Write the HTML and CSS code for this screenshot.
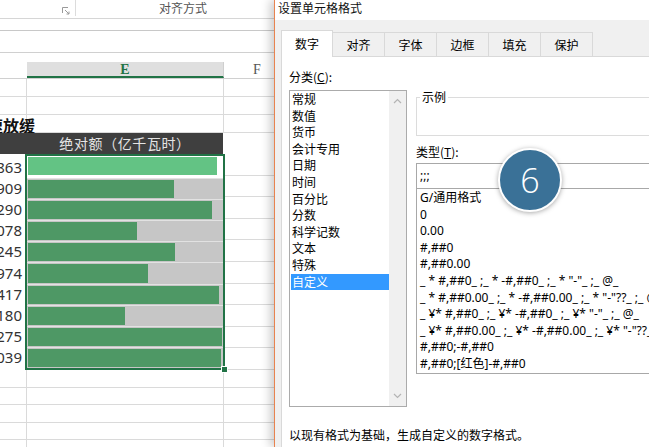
FILE: index.html
```html
<!DOCTYPE html>
<html lang="zh-CN">
<head>
<meta charset="utf-8">
<title>设置单元格格式</title>
<link rel="stylesheet" href="styles.css">
</head>
<body>
<div class="screen">
  <div class="sheet">
    <div class="ribbon">
      <div class="rb-left">
        <svg class="launcher" width="8" height="8" viewBox="0 0 8 8"><path d="M0.5 6V0.5H6" fill="none" stroke="#9a9a9a"/><path d="M3 3L7 7M7 4.5V7H4.5" fill="none" stroke="#9a9a9a"/></svg>
      </div>
      <div class="rb-group">对齐方式</div>
    </div>
    <div class="fbar"></div>
    <div class="fbar2"></div>
    <div class="spacer"></div>
    <div class="colhead">
      <div class="cd hd"></div>
      <div class="ce he">E</div>
      <div class="cf hf">F</div>
    </div>
    <div class="row r18"><div class="cd"></div><div class="ce"></div><div class="cf"></div></div>
    <div class="row r18"><div class="cd"></div><div class="ce"></div><div class="cf"></div></div>
    <div class="row r18"><div class="cd"><span class="sheet-title">速放缓</span></div><div class="ce"></div><div class="cf"></div></div>
    <div class="row dark"><div class="cd darkc"></div><div class="ce darkc">绝对额（亿千瓦时）</div><div class="cf"></div></div>
    <div class="data">
      <div class="nums">
        <div class="num"><span>5863</span></div>
        <div class="num"><span>4909</span></div>
        <div class="num"><span>5290</span></div>
        <div class="num"><span>3078</span></div>
        <div class="num"><span>4245</span></div>
        <div class="num"><span>3974</span></div>
        <div class="num"><span>5417</span></div>
        <div class="num"><span>2180</span></div>
        <div class="num"><span>5275</span></div>
        <div class="num"><span>5039</span></div>
      </div>
      <div class="sel">
        <div class="track first"><div class="bar" style="width:98.5%"></div></div>
        <div class="track"><div class="bar" style="width:75%"></div></div>
        <div class="track"><div class="bar" style="width:95%"></div></div>
        <div class="track"><div class="bar" style="width:56%"></div></div>
        <div class="track"><div class="bar" style="width:76%"></div></div>
        <div class="track"><div class="bar" style="width:62%"></div></div>
        <div class="track"><div class="bar" style="width:98.5%"></div></div>
        <div class="track"><div class="bar" style="width:50%"></div></div>
        <div class="track"><div class="bar" style="width:100%"></div></div>
        <div class="track"><div class="bar" style="width:99.5%"></div></div>
        <div class="handle"></div>
      </div>
      <div class="fcol">
        <div class="fcell"></div><div class="fcell"></div><div class="fcell"></div><div class="fcell"></div><div class="fcell"></div>
        <div class="fcell"></div><div class="fcell"></div><div class="fcell"></div><div class="fcell"></div><div class="fcell"></div>
      </div>
    </div>
    <div class="row r17"><div class="cd"></div><div class="ce"></div><div class="cf"></div></div>
    <div class="row r17"><div class="cd"></div><div class="ce"></div><div class="cf"></div></div>
    <div class="row r17"><div class="cd"></div><div class="ce"></div><div class="cf"></div></div>
    <div class="row r17"><div class="cd"></div><div class="ce"></div><div class="cf"></div></div>
    <div class="row r17"><div class="cd"></div><div class="ce"></div><div class="cf"></div></div>
  </div>

  <div class="dialog">
    <div class="dtitle">设置单元格格式</div>
    <div class="dbody">
      <div class="tabs">
        <div class="tab on">数字</div>
        <div class="tab">对齐</div>
        <div class="tab">字体</div>
        <div class="tab">边框</div>
        <div class="tab">填充</div>
        <div class="tab">保护</div>
      </div>
      <div class="panel">
        <div class="pgrid">
          <div class="lcol">
            <div class="lbl">分类(<u>C</u>):</div>
            <div class="lbox">
              <div class="items">
                <div class="item">常规</div>
                <div class="item">数值</div>
                <div class="item">货币</div>
                <div class="item">会计专用</div>
                <div class="item">日期</div>
                <div class="item">时间</div>
                <div class="item">百分比</div>
                <div class="item">分数</div>
                <div class="item">科学记数</div>
                <div class="item">文本</div>
                <div class="item">特殊</div>
                <div class="item sel-item">自定义</div>
              </div>
              <div class="sbar">
                <svg width="9" height="6" viewBox="0 0 9 6"><polyline points="1,5 4.5,1.5 8,5" fill="none" stroke="#b4b4b4" stroke-width="1.2"/></svg>
                <svg width="9" height="6" viewBox="0 0 9 6"><polyline points="1,1 4.5,4.5 8,1" fill="none" stroke="#b4b4b4" stroke-width="1.2"/></svg>
              </div>
            </div>
          </div>
          <div class="rcol">
            <fieldset class="sample">
              <legend>示例</legend>
              <div class="sample-body"></div>
            </fieldset>
            <div class="lbl type-lbl">类型(<u>T</u>):</div>
            <div class="tinput">;;;</div>
            <div class="flist">
              <div class="fitem">G/通用格式</div>
              <div class="fitem">0</div>
              <div class="fitem">0.00</div>
              <div class="fitem">#,##0</div>
              <div class="fitem">#,##0.00</div>
              <div class="fitem">_ * #,##0_ ;_ * -#,##0_ ;_ * "-"_ ;_ @_ </div>
              <div class="fitem">_ * #,##0.00_ ;_ * -#,##0.00_ ;_ * "-"??_ ;_ @_ </div>
              <div class="fitem">_ ¥* #,##0_ ;_ ¥* -#,##0_ ;_ ¥* "-"_ ;_ @_ </div>
              <div class="fitem">_ ¥* #,##0.00_ ;_ ¥* -#,##0.00_ ;_ ¥* "-"??_ ;_ @_ </div>
              <div class="fitem">#,##0;-#,##0</div>
              <div class="fitem">#,##0;[红色]-#,##0</div>
            </div>
          </div>
        </div>
        <div class="hint">以现有格式为基础，生成自定义的数字格式。</div>
      </div>
    </div>
  </div>

  <div class="badge">6</div>
</div>
</body>
</html>
```

FILE: styles.css
```css
* { box-sizing: border-box; }
html, body { margin: 0; padding: 0; background: #fff; }
body { font-family: "Noto Sans", "Noto Sans CJK SC", sans-serif; font-size: 12px; color: #000; }

.screen {
  position: relative;
  width: 649px;
  height: 447px;
  overflow: hidden;
  display: flex;
  background: #fff;
}

/* ---------- sheet ---------- */
.sheet {
  width: 274px;
  flex: none;
  overflow: hidden;
  display: flex;
  flex-direction: column;
}
.ribbon {
  height: 19px;
  flex: none;
  display: flex;
  border-bottom: 1px solid #d6d6d6;
}
.rb-left {
  width: 76px;
  height: 16px;
  border-right: 1px solid #dcdcdc;
  display: flex;
  justify-content: flex-end;
  align-items: flex-end;
  padding: 0 5px 1px 0;
}
.rb-group {
  flex: 1;
  text-align: center;
  padding-left: 16px;
  line-height: 16px;
  color: #555;
  font-family: "Noto Sans CJK SC", sans-serif;
}
.fbar { height: 12px; flex: none; border-bottom: 1px solid #c8c8c8; }
.fbar2 { height: 22px; flex: none; border-bottom: 1px solid #d0d0d0; }
.spacer { height: 9px; flex: none; }

.colhead, .row {
  display: flex;
  flex: none;
  border-bottom: 1px solid #dadada;
}
.colhead { height: 17px; border-bottom-color: #d0d0d0; }
.cd { width: 27px; flex: none; border-right: 1px solid #dadada; }
.ce { width: 197px; flex: none; border-right: 1px solid #dadada; }
.cf { flex: 1; }
.hd { border-right: none; }
.he {
  background: #dfdfdf;
  border-bottom: 2px solid #217346;
  border-right-color: #cfcfcf;
  color: #217346;
  font-family: "Liberation Serif", serif;
  font-weight: bold;
  font-size: 14px;
  line-height: 15px;
  text-align: center;
}
.hf {
  color: #555;
  font-family: "Liberation Serif", serif;
  font-size: 14px;
  line-height: 16px;
  padding-left: 29px;
}
.r18 { height: 18px; }
.r17 { height: 17.5px; }
.sheet-title {
  display: block;
  margin: 1px 0 0 -13px;
  white-space: nowrap;
  font-family: "Noto Sans CJK SC", sans-serif;
  font-weight: bold;
  font-size: 16px;
  line-height: 18px;
  color: #111;
}
.dark { height: 21px; border-bottom: none; }
.darkc { background: #3f3f3f; border-right: none; }
.dark .ce {
  width: 196px;
  color: #e4e4e4;
  font-family: "Noto Sans CJK SC", sans-serif;
  font-size: 14px;
  line-height: 21px;
  letter-spacing: 0.6px;
  text-align: center;
}

.data {
  height: 216px;
  flex: none;
  display: flex;
}
.nums {
  width: 25px;
  flex: none;
  display: flex;
  flex-direction: column;
  padding: 2px 0;
}
.num {
  flex: 1;
  display: flex;
  justify-content: flex-end;
  align-items: center;
  overflow: hidden;
  padding-right: 3px;
  font-size: 15px;
  color: #333;
  white-space: nowrap;
}
.sel {
  position: relative;
  width: 200px;
  flex: none;
  border: 2px solid #217346;
  display: flex;
  flex-direction: column;
}
.track {
  flex: 1;
  background: #c6c6c6;
  border-top: 1px solid #e2e2e2;
  padding: 1px 1px 1px 1px;
}
.track.first { background: #fff; border-top: none; padding: 1px 3px 3px 1px; }
.bar { height: 100%; background: #4e9865; }
.track.first .bar { background: #63c384; }
.handle {
  position: absolute;
  right: -5px;
  bottom: -5px;
  width: 7px;
  height: 7px;
  background: #217346;
  border: 1px solid #fff;
}
.fcol { flex: 1; display: flex; flex-direction: column; }
.fcell { flex: 1; border-bottom: 1px solid #dadada; }

/* ---------- dialog ---------- */
.dialog {
  position: relative;
  z-index: 1;
  width: 375px;
  flex: none;
  border-left: 1px solid #e8834f;
  background: #f0f0f0;
  display: flex;
  flex-direction: column;
  overflow: hidden;
  box-shadow: -4px 0 9px rgba(0, 0, 0, 0.2);
  font-family: "Noto Sans", "Noto Sans CJK SC", sans-serif;
}
.dtitle {
  height: 20px;
  flex: none;
  background: #fff;
  padding-left: 3px;
  line-height: 16px;
  font-family: "Noto Sans CJK SC", sans-serif;
  color: #111;
}
.dbody {
  flex: 1;
  display: flex;
  flex-direction: column;
  padding: 10px 0 0 6px;
}
.tabs {
  height: 26px;
  flex: none;
  display: flex;
  align-items: flex-end;
}
.tab {
  width: 52px;
  height: 24px;
  border: 1px solid #d9d9d9;
  border-left: none;
  border-bottom: none;
  background: #f0f0f0;
  text-align: center;
  line-height: 23px;
  font-family: "Noto Sans CJK SC", sans-serif;
}
.tab.on {
  position: relative;
  height: 27px;
  margin-bottom: -1px;
  background: #fff;
  border-left: 1px solid #d9d9d9;
  line-height: 26px;
}
.panel {
  flex: 1;
  background: #fff;
  border-top: 1px solid #d9d9d9;
  border-left: 1px solid #d9d9d9;
  padding: 12px 0 0 7px;
}
.pgrid { display: flex; gap: 9px; }
.lcol { width: 118px; flex: none; }
.lbl { line-height: 16px; height: 16px; font-family: "Noto Sans CJK SC", sans-serif; }
.lcol .lbl { margin-bottom: 5px; }
.lbox {
  height: 317px;
  border: 1px solid #ababab;
  display: flex;
}
.items { flex: 1; padding-left: 1px; }
.item {
  height: 16.6px;
  line-height: 16.6px;
  padding-left: 1px;
  font-family: "Noto Sans CJK SC", sans-serif;
}
.sel-item { background: #3399ff; color: #fff; }
.sbar {
  width: 17px;
  flex: none;
  background: #f0f0f0;
  display: flex;
  flex-direction: column;
  justify-content: space-between;
  align-items: center;
  padding: 7px 0 7px;
}
.rcol { width: 260px; flex: none; }
.sample {
  margin: 20px 0 0 0;
  padding: 0;
  border: 1px solid #dcdcdc;
}
.sample legend {
  margin-left: 3px;
  padding: 0 2px;
  line-height: 16px;
  font-family: "Noto Sans CJK SC", sans-serif;
}
.sample-body { height: 30px; }
.type-lbl { margin-top: 8px; }
.tinput {
  margin-top: 3px;
  height: 26px;
  border: 1px solid #a8a8a8;
  padding-left: 3px;
  line-height: 24px;
}
.flist {
  height: 185px;
  border: 1px solid #a8a8a8;
  border-top: none;
  padding: 1px 0 0 3px;
  overflow: hidden;
}
.fitem {
  height: 16.6px;
  line-height: 16.6px;
  white-space: pre;
}
.hint {
  margin-top: 20px;
  line-height: 16px;
  font-family: "Noto Sans CJK SC", sans-serif;
}

/* ---------- badge ---------- */
.badge {
  position: absolute;
  z-index: 2;
  left: 498px;
  top: 148px;
  width: 64px;
  height: 64px;
  border-radius: 50%;
  background: #3a7197;
  border: 2px solid #fff;
  box-shadow: 0 1px 5px rgba(0, 0, 0, 0.35);
  display: flex;
  align-items: center;
  justify-content: center;
  color: #fff;
  font-family: "Open Sans", sans-serif;
  font-weight: 300;
  font-size: 34px;
  line-height: 1;
}
```
